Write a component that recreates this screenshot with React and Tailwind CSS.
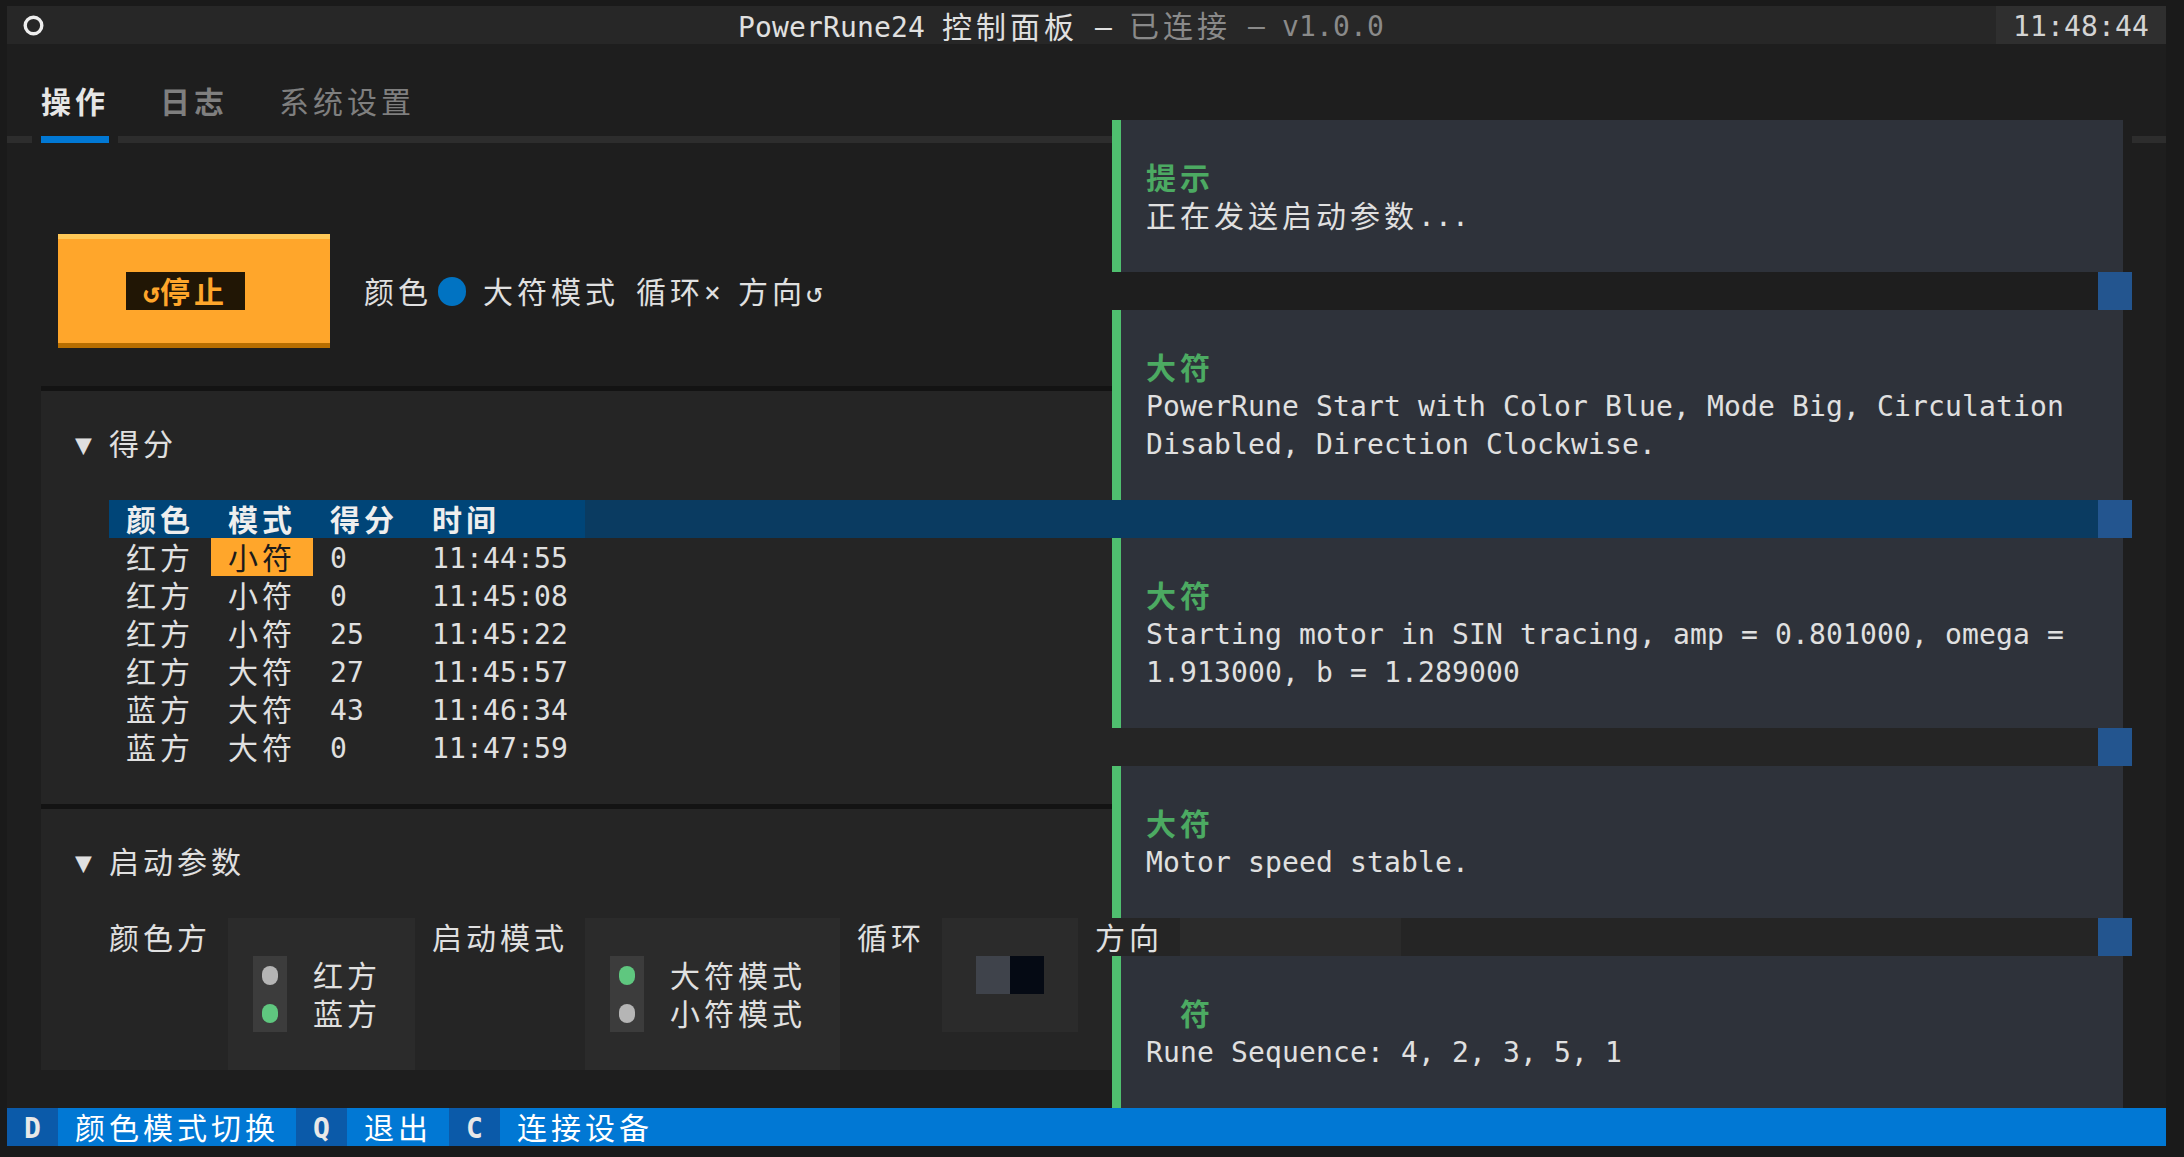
import React from 'react';

const WIDE = /[\u1100-\u115F\u2E80-\uA4CF\uAC00-\uD7A3\uF900-\uFAFF\uFE30-\uFE4F\uFF00-\uFF60\uFFE0-\uFFE6]/;

// terminal-style text: every character sits in its own cell (17px, or 34px for CJK)
function Txt({ s, className = '' }) {
  return (
    <span className={`inline-flex translate-y-[2px] ${className}`}>
      {Array.from(s).map((ch, i) =>
        WIDE.test(ch) ? (
          <span key={i} className="inline-block w-[34px] text-[30px]">{ch}</span>
        ) : (
          <span key={i} className="inline-block w-[17px]">{ch === ' ' ? '\u00a0' : ch}</span>
        )
      )}
    </span>
  );
}

const scores = [
  ['红方', '小符', '0', '11:44:55'],
  ['红方', '小符', '0', '11:45:08'],
  ['红方', '小符', '25', '11:45:22'],
  ['红方', '大符', '27', '11:45:57'],
  ['蓝方', '大符', '43', '11:46:34'],
  ['蓝方', '大符', '0', '11:47:59'],
];

const toasts = [
  { title: '提示', lines: ['正在发送启动参数...'], h: 'h-[152px]' },
  {
    title: '大符',
    lines: ['PowerRune Start with Color Blue, Mode Big, Circulation', 'Disabled, Direction Clockwise.'],
    h: 'h-[190px]',
  },
  {
    title: '大符',
    lines: ['Starting motor in SIN tracing, amp = 0.801000, omega =', '1.913000, b = 1.289000'],
    h: 'h-[190px]',
  },
  { title: '大符', lines: ['Motor speed stable.'], h: 'h-[152px]' },
  { title: '  符', lines: ['Rune Sequence: 4, 2, 3, 5, 1'], h: 'h-[152px]' },
];

function Radio({ label, on }) {
  return (
    <div className="flex h-[38px] leading-[38px]">
      <div className="w-[25px]" />
      <div className="w-[34px] bg-[#3c3c3c] flex items-center justify-center">
        <span className={on ? 'w-[16px] h-[19px] rounded-full bg-[#5fc77f]' : 'w-[16px] h-[19px] rounded-full bg-[#b5b5b5]'} />
      </div>
      <div className="w-[26px]" />
      <Txt s={label} />
    </div>
  );
}

function Toast({ title, lines, h }) {
  return (
    <div className={`flex ${h}`}>
      <div className="w-[1011px] bg-[#2e323a] border-l-[9px] border-[#4fbf6f] pl-[25px] pt-[38px] leading-[38px]">
        <div className="h-[38px] font-bold text-[#4caa62]">
          <Txt s={title} />
        </div>
        {lines.map((l) => (
          <div key={l} className="h-[38px]">
            <Txt s={l} />
          </div>
        ))}
      </div>
      <div className="w-[9px] bg-[#1e1e1e]" />
    </div>
  );
}

export default function App() {
  return (
    <div className="w-[2184px] h-[1157px] overflow-hidden bg-[#1a1a1a] pl-[7px] pt-[6px] font-['DejaVu_Sans_Mono','Noto_Sans_CJK_SC',monospace] text-[28px] text-[#e0e0e0]">
      <div className="relative w-[2159px] h-[1140px] bg-[#1e1e1e] flex flex-col">
        {/* Header */}
        <div className="flex h-[38px] leading-[38px] bg-[#272727]">
          <div className="w-[136px] flex items-center pl-[16px]">
            <svg width="21" height="21" viewBox="0 0 21 21">
              <circle cx="10.5" cy="10.5" r="8.3" fill="none" stroke="#eeeeee" strokeWidth="3.4" />
            </svg>
          </div>
          <div className="flex-1 pl-[595px]">
            <Txt s="PowerRune24 控制面板 – " className="text-[#e0e0e0]" />
            <Txt s="已连接 – v1.0.0" className="text-[#8a8a8a]" />
          </div>
          <div className="w-[170px] bg-[#2f2f2f] pl-[17px] text-[#d4d4d4]">
            <Txt s="11:48:44" />
          </div>
        </div>

        {/* Tabs */}
        <div className="h-[38px]" />
        <div className="flex h-[38px] leading-[38px] font-bold">
          <div className="pl-[34px] text-[#e6e6e6]">
            <Txt s="操作" />
          </div>
          <div className="pl-[51px] text-[#7f7f7f]">
            <Txt s="日志" />
          </div>
          <div className="pl-[51px] font-normal text-[#7f7f7f]">
            <Txt s="系统设置" />
          </div>
        </div>
        <div className="h-[38px] pt-[16px]">
          <div className="flex h-[7px]">
            <div className="w-[25px] bg-[#2d2d2d]" />
            <div className="w-[9px]" />
            <div className="w-[68px] bg-[#0178d4]" />
            <div className="w-[9px]" />
            <div className="flex-1 bg-[#2d2d2d]" />
          </div>
        </div>

        {/* Body */}
        <div className="flex h-[950px]">
          <div className="w-[2091px] flex flex-col">
            <div className="h-[76px]" />
            <div className="flex h-[114px] items-center">
              <div className="ml-[51px] w-[272px] h-[114px] bg-[#ffa62b] border-t-[5px] border-b-[5px] border-t-[#ffc857] border-b-[#b86e00] flex items-center pl-[68px]">
                <div className="h-[38px] leading-[38px] bg-[#211605] px-[17px] font-bold text-[#ffa62b]">
                  <Txt s="↺停止" />
                </div>
              </div>
              <div className="ml-[34px] flex h-[38px] leading-[38px]">
                <Txt s="颜色" />
                <span className="inline-flex w-[34px] h-[38px] items-center pl-[6px]">
                  <span className="w-[29px] h-[29px] rounded-full bg-[#0173c2]" />
                </span>
                <Txt s=" 大符模式 循环× 方向↺" />
              </div>
            </div>
            <div className="h-[38px]" />

            {/* 得分 */}
            <div className="ml-[34px] w-[2057px] h-[418px] bg-[#252525] border-t-[5px] border-[#131313] flex flex-col leading-[38px]">
              <div className="h-[33px]" />
              <div className="h-[38px] pl-[34px]">
                <Txt s="▼ 得分" />
              </div>
              <div className="h-[38px]" />
              <div className="ml-[68px] flex flex-col">
                <div className="flex h-[38px] bg-[#0a3b61]">
                  <div className="flex w-[476px] bg-[#004578] font-bold text-[#eeeeee]">
                    {['颜色', '模式', '得分'].map((h) => (
                      <div key={h} className="w-[102px] pl-[17px]">
                        <Txt s={h} />
                      </div>
                    ))}
                    <div className="w-[170px] pl-[17px]">
                      <Txt s="时间" />
                    </div>
                  </div>
                </div>
                {scores.map((r, i) => (
                  <div key={i} className="flex h-[38px]">
                    <div className="w-[102px] pl-[17px]">
                      <Txt s={r[0]} />
                    </div>
                    <div className={i === 0 ? 'w-[102px] pl-[17px] bg-[#ffa62b] text-[#1b1b1b]' : 'w-[102px] pl-[17px]'}>
                      <Txt s={r[1]} />
                    </div>
                    <div className="w-[102px] pl-[17px]">
                      <Txt s={r[2]} />
                    </div>
                    <div className="w-[170px] pl-[17px]">
                      <Txt s={r[3]} />
                    </div>
                  </div>
                ))}
              </div>
            </div>

            {/* 启动参数 */}
            <div className="ml-[34px] w-[2057px] h-[266px] bg-[#252525] border-t-[5px] border-[#131313] flex flex-col leading-[38px]">
              <div className="h-[33px]" />
              <div className="h-[38px] pl-[34px]">
                <Txt s="▼ 启动参数" />
              </div>
              <div className="h-[38px]" />
              <div className="flex h-[152px] pl-[68px]">
                <div className="w-[119px] h-[38px]">
                  <Txt s="颜色方" />
                </div>
                <div className="w-[187px] h-[152px] bg-[#2b2b2b] pt-[38px]">
                  <Radio label="红方" on={false} />
                  <Radio label="蓝方" on />
                </div>
                <div className="w-[170px] h-[38px] pl-[17px]">
                  <Txt s="启动模式" />
                </div>
                <div className="w-[255px] h-[152px] bg-[#2b2b2b] pt-[38px]">
                  <Radio label="大符模式" on />
                  <Radio label="小符模式" on={false} />
                </div>
                <div className="w-[102px] h-[38px] pl-[17px]">
                  <Txt s="循环" />
                </div>
                <div className="w-[136px] h-[114px] bg-[#2b2b2b] pt-[38px] pl-[34px]">
                  <div className="flex h-[38px]">
                    <div className="w-[34px] bg-[#3f434b]" />
                    <div className="w-[34px] bg-[#050a14]" />
                  </div>
                </div>
                <div className="w-[102px] h-[38px] pl-[17px]">
                  <Txt s="方向" />
                </div>
                <div className="w-[221px] h-[114px] bg-[#2b2b2b]" />
              </div>
            </div>
            <div className="h-[38px]" />
          </div>
          <div className="w-[34px] bg-[#23558f]" />
          <div className="w-[34px]" />
        </div>

        {/* Footer */}
        <div className="flex h-[38px] leading-[38px] bg-[#0178d4] text-white">
          {[
            ['D', '颜色模式切换'],
            ['Q', '退出'],
            ['C', '连接设备'],
          ].map(([k, label]) => (
            <div key={k} className="flex">
              <div className="bg-[#0b5aa9] px-[17px] font-bold text-[#e8e8e8]">
                <Txt s={k} />
              </div>
              <div className="px-[17px]">
                <Txt s={label} />
              </div>
            </div>
          ))}
        </div>

        {/* Notifications */}
        <div className="absolute left-[1105px] top-[114px] w-[1020px] flex flex-col gap-[38px]">
          {toasts.map((t, i) => (
            <Toast key={i} {...t} />
          ))}
        </div>
      </div>
    </div>
  );
}
